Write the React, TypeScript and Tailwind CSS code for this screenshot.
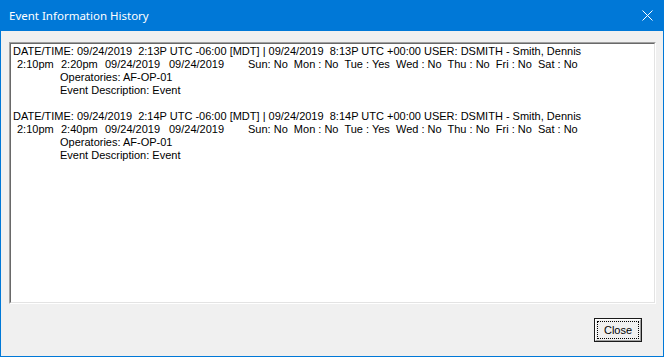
const ENTRIES = [
  {
    stamp:
      "DATE/TIME: 09/24/2019  2:13P UTC -06:00 [MDT] | 09/24/2019  8:13P UTC +00:00 USER: DSMITH - Smith, Dennis",
    start: "2:10pm",
    end: "2:20pm",
  },
  {
    stamp:
      "DATE/TIME: 09/24/2019  2:14P UTC -06:00 [MDT] | 09/24/2019  8:14P UTC +00:00 USER: DSMITH - Smith, Dennis",
    start: "2:10pm",
    end: "2:40pm",
  },
];

const DAYS = "Sun: No  Mon : No  Tue : Yes  Wed : No  Thu : No  Fri : No  Sat : No";

function HistoryEntry({ stamp, start, end }: { stamp: string; start: string; end: string }) {
  return (
    <div className="flex flex-col">
      <div className="whitespace-pre">{stamp}</div>
      <div className="flex whitespace-pre">
        <span className="w-[48px] pl-[4px]">{start}</span>
        <span className="w-[44px]">{end}</span>
        <span className="w-[64px]">09/24/2019</span>
        <span className="w-[79px]">09/24/2019</span>
        <span>{DAYS}</span>
      </div>
      <div className="pl-[47px]">Operatories: AF-OP-01</div>
      <div className="pl-[47px]">Event Description: Event</div>
    </div>
  );
}

export default function App() {
  return (
    <div className="flex h-[357px] w-[664px] flex-col bg-[#0078d7]">
      {/* title bar */}
      <div className="flex h-[31px] items-center justify-between pl-[9px] pr-[10px] font-['Noto_Sans',sans-serif] text-[11.5px] text-white">
        <span>Event Information History</span>
        <svg width="11" height="11" viewBox="0 0 11 11" className="mr-[1px]">
          <path d="M0.5 0.5 L10.5 10.5 M10.5 0.5 L0.5 10.5" stroke="white" strokeWidth="1" />
        </svg>
      </div>

      {/* client area */}
      <div className="mx-[1px] mb-[1px] flex flex-1 flex-col bg-[#f0f0f0] pb-[14px] pl-[8px] pr-[7px] pt-[11px]">
        <div className="h-[262px] border border-b-white border-l-[#a0a0a0] border-r-white border-t-[#a0a0a0]">
          <div className="h-full border border-b-[#e3e3e3] border-l-[#696969] border-r-[#e3e3e3] border-t-[#696969] bg-white pl-[2px] pt-[1px] font-['Liberation_Sans',Arial,sans-serif] text-[11px] leading-[13px] text-black">
            <div className="flex flex-col gap-[13px]">
              {ENTRIES.map((e, i) => (
                <HistoryEntry key={i} {...e} />
              ))}
            </div>
          </div>
        </div>

        <div className="mt-auto flex justify-end pr-[14px]">
          <button className="h-[24px] w-[48px] border border-[#1a1a1a] bg-[#f0f0f0] p-0">
            <div className="h-full border border-b-[#a0a0a0] border-l-white border-r-[#a0a0a0] border-t-white">
              <div className="flex h-full items-center justify-center px-[1px] py-[1px]">
                <div className="flex h-full w-full items-center justify-center border border-dotted border-black font-['Liberation_Sans',Arial,sans-serif] text-[11px] text-black">
                  Close
                </div>
              </div>
            </div>
          </button>
        </div>
      </div>
    </div>
  );
}
